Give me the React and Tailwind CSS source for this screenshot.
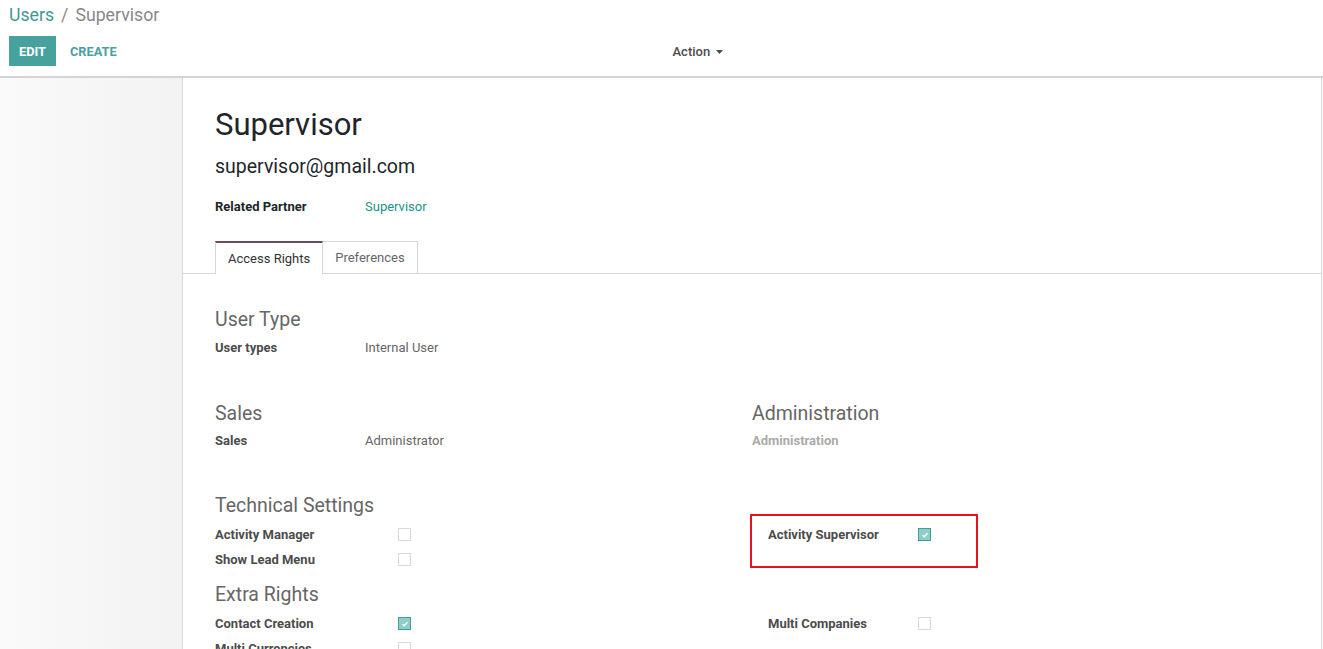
import React from "react";

const font = { fontFamily: "Roboto, 'Noto Sans', sans-serif" };

function Checkbox({ checked }) {
  if (checked) {
    return (
      <span className="inline-flex h-[13px] w-[13px] items-center justify-center border border-[#3f9e99] bg-[#8fcdc9]">
        <svg width="8" height="8" viewBox="0 0 8 8">
          <path d="M1.5 4.3 L3.2 5.8 L6.5 2.2" fill="none" stroke="#ffffff" strokeWidth="1.3" />
        </svg>
      </span>
    );
  }
  return <span className="inline-block h-[13px] w-[13px] border border-[#d9d9d9] bg-white" />;
}

function Heading({ children }) {
  return <div className="h-[24px] pt-[1px] text-[19.5px] leading-[24px] text-[#666666]">{children}</div>;
}

function Field({ label, value, muted }) {
  return (
    <div className="flex h-[20px] items-center text-[13px]">
      <div className={`w-[150px] font-bold ${muted ? "text-[#aaaaaa]" : "text-[#4c4c4c]"}`}>{label}</div>
      {value && <div className="text-[#666666]">{value}</div>}
    </div>
  );
}

function CheckRow({ label, checked, offset }) {
  return (
    <div className="flex h-[25px] items-center text-[13px]">
      <div className={`${offset} shrink-0 font-bold text-[#4c4c4c]`}>{label}</div>
      <Checkbox checked={checked} />
    </div>
  );
}

export default function App() {
  return (
    <div className="h-[649px] w-[1323px] overflow-hidden bg-white" style={font}>
      {/* control panel */}
      <div className="h-[78px] border-b-2 border-[#d4d4d4] bg-white px-[9px]">
        <div className="flex h-[30px] items-center text-[17.7px]">
          <span className="text-[#3f9893]">Users</span>
          <span className="mx-[7px] text-[#888888]">/</span>
          <span className="text-[#888888]">Supervisor</span>
        </div>
        <div className="mt-[6px] flex">
          <div className="flex w-1/2 items-center">
            <button className="h-[30px] w-[47px] bg-[#47a29e] pt-[2px] text-[12.8px] font-bold text-white">EDIT</button>
            <button className="ml-[14px] pt-[2px] text-[12.8px] font-bold text-[#47a29e]">CREATE</button>
          </div>
          <div className="flex w-1/2 items-center pl-[11px] pt-[2px]">
            <span className="text-[13px] font-medium text-[#4c4c4c]">Action</span>
            <svg className="ml-[6px]" width="7" height="4" viewBox="0 0 7 4">
              <path d="M0 0 L7 0 L3.5 4 Z" fill="#4c4c4c" />
            </svg>
          </div>
        </div>
      </div>

      {/* body */}
      <div className="flex h-[571px] bg-[#f9f9f9]">
        <div className="w-[182px] shrink-0 bg-gradient-to-r from-[#fafafa] to-[#f2f2f2]" />
        <div className="w-[1140px] shrink-0 border-x border-[#d9d9d9] bg-white">
          <div className="pl-[32px] pt-[28px]">
            <div className="text-[31px] leading-[37px] text-[#212529]">Supervisor</div>
            <div className="mt-[12px] text-[19.5px] leading-[24px] text-[#212529]">supervisor@gmail.com</div>
            <div className="mt-[18px] flex h-[20px] items-center text-[13px]">
              <div className="w-[150px] font-bold text-[#212529]">Related Partner</div>
              <div className="text-[#21918c]">Supervisor</div>
            </div>
          </div>

          {/* tabs */}
          <div className="mt-[24px] flex border-b border-[#d6d6d6] pl-[32px]">
            <div className="-mb-px flex h-[33px] items-center border-x border-t-2 border-[#d6d6d6] border-t-[#6d4b63] bg-white px-[12px] pt-[1px] text-[13px] text-[#333333]">
              Access Rights
            </div>
            <div className="flex h-[32px] items-center border-r border-t border-[#d6d6d6] px-[12px] pt-[1px] text-[13px] text-[#666666]">
              Preferences
            </div>
          </div>

          <div className="pl-[32px]">
            {/* user type */}
            <div className="mt-[33px]">
              <Heading>User Type</Heading>
              <div className="mt-[7px]">
                <Field label="User types" value="Internal User" />
              </div>
            </div>

            {/* sales / administration */}
            <div className="mt-[43px] flex">
              <div className="w-[537px]">
                <Heading>Sales</Heading>
                <div className="mt-[6px]">
                  <Field label="Sales" value="Administrator" />
                </div>
              </div>
              <div>
                <Heading>Administration</Heading>
                <div className="mt-[6px]">
                  <Field label="Administration" muted />
                </div>
              </div>
            </div>

            {/* technical settings */}
            <div className="mt-[42px] flex">
              <div className="w-[535px]">
                <Heading>Technical Settings</Heading>
                <div className="mt-[5px]">
                  <CheckRow label="Activity Manager" offset="w-[183px]" />
                  <CheckRow label="Show Lead Menu" offset="w-[183px]" />
                </div>
              </div>
              <div>
                <div className="h-[21px]" />
                <div className="h-[54px] w-[228px] border-2 border-[#e8121c] pl-[16px] pt-[6px]">
                  <CheckRow label="Activity Supervisor" checked offset="w-[150px]" />
                </div>
              </div>
            </div>

            {/* extra rights */}
            <div className="mt-[10px] flex">
              <div className="w-[553px]">
                <Heading>Extra Rights</Heading>
                <div className="mt-[5px]">
                  <CheckRow label="Contact Creation" checked offset="w-[183px]" />
                  <CheckRow label="Multi Currencies" offset="w-[183px]" />
                </div>
              </div>
              <div>
                <div className="h-[24px]" />
                <div className="mt-[5px]">
                  <CheckRow label="Multi Companies" offset="w-[150px]" />
                </div>
              </div>
            </div>
          </div>
        </div>
      </div>
    </div>
  );
}
